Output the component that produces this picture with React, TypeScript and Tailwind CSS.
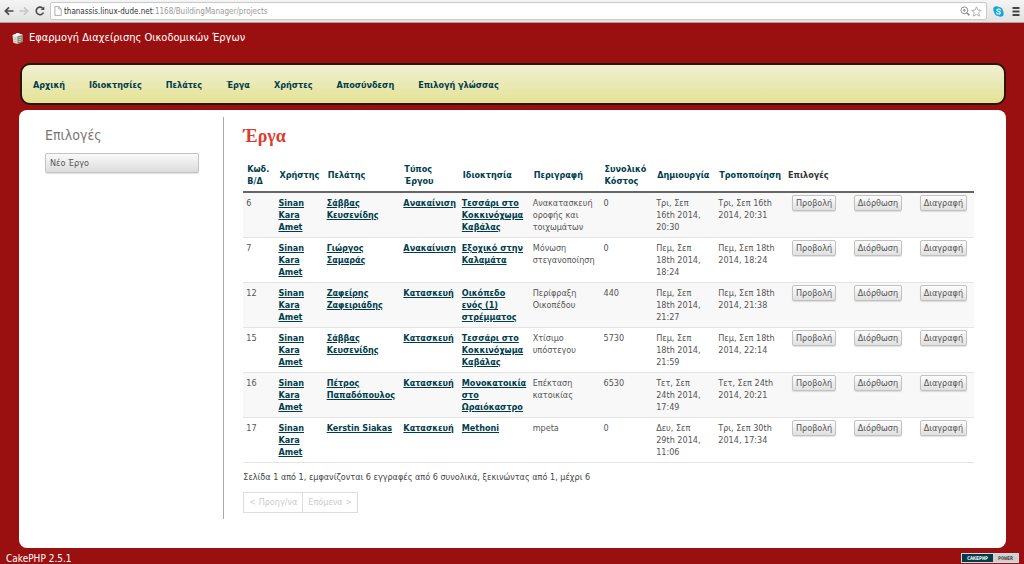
import React from "react";

type Project = {
  id: number;
  client: string;
  kind: string;
  property: string;
  description: string;
  cost: number;
  created: string;
  modified: string;
};

const navItems = ["Αρχική", "Ιδιοκτησίες", "Πελάτες", "Έργα", "Χρήστες", "Αποσύνδεση", "Επιλογή γλώσσας"];

const columns = [
  { label: "Κωδ.\nΒ/Δ", width: "w-[4.4%]" },
  { label: "Χρήστης", width: "w-[6.6%]" },
  { label: "Πελάτης", width: "w-[10.5%]" },
  { label: "Τύπος\nΈργου", width: "w-[8%]" },
  { label: "Ιδιοκτησία", width: "w-[9.7%]" },
  { label: "Περιγραφή", width: "w-[9.7%]" },
  { label: "Συνολικό\nΚόστος", width: "w-[7.2%]" },
  { label: "Δημιουργία", width: "w-[8.5%]" },
  { label: "Τροποποίηση", width: "w-[9.4%]" },
];

const projects: Project[] = [
  { id: 6, client: "Σάββας\nΚευσενίδης", kind: "Ανακαίνιση", property: "Τεσσάρι στο\nΚοκκινόχωμα\nΚαβάλας", description: "Ανακατασκευή\nοροφής και\nτοιχωμάτων", cost: 0, created: "Τρι, Σεπ\n16th 2014,\n20:30", modified: "Τρι, Σεπ 16th\n2014, 20:31" },
  { id: 7, client: "Γιώργος\nΣαμαράς", kind: "Ανακαίνιση", property: "Εξοχικό στην\nΚαλαμάτα", description: "Μόνωση\nστεγανοποίηση", cost: 0, created: "Πεμ, Σεπ\n18th 2014,\n18:24", modified: "Πεμ, Σεπ 18th\n2014, 18:24" },
  { id: 12, client: "Ζαφείρης\nΖαφειριάδης", kind: "Κατασκευή", property: "Οικόπεδο\nενός (1)\nστρέμματος", description: "Περίφραξη\nΟικοπέδου", cost: 440, created: "Πεμ, Σεπ\n18th 2014,\n21:27", modified: "Πεμ, Σεπ 18th\n2014, 21:38" },
  { id: 15, client: "Σάββας\nΚευσενίδης", kind: "Κατασκευή", property: "Τεσσάρι στο\nΚοκκινόχωμα\nΚαβάλας", description: "Χτίσιμο\nυπόστεγου", cost: 5730, created: "Πεμ, Σεπ\n18th 2014,\n21:59", modified: "Πεμ, Σεπ 18th\n2014, 22:14" },
  { id: 16, client: "Πέτρος\nΠαπαδόπουλος", kind: "Κατασκευή", property: "Μονοκατοικία\nστο\nΩραιόκαστρο", description: "Επέκταση\nκατοικίας", cost: 6530, created: "Τετ, Σεπ\n24th 2014,\n17:49", modified: "Τετ, Σεπ 24th\n2014, 20:21" },
  { id: 17, client: "Kerstin Siakas", kind: "Κατασκευή", property: "Methoni", description: "mpeta", cost: 0, created: "Δευ, Σεπ\n29th 2014,\n11:06", modified: "Τρι, Σεπ 30th\n2014, 17:34" },
];

function BrowserBar() {
  return (
    <div className="flex h-[23px] items-center border-b border-[#b9a0a0] bg-linear-to-b from-[#f4f4f4] to-[#e2e2e2] pr-1 pl-1">
      <button type="button" aria-label="Back" className="flex w-[14px] shrink-0">
        <svg viewBox="0 0 10 10" className="size-[10px]" fill="none" stroke="#4a4a4a" strokeWidth="1.7"><path d="M9.5 5H1.5M5 1.3 1.3 5 5 8.7" /></svg>
      </button>
      <button type="button" aria-label="Forward" className="ml-px flex w-[16px] shrink-0">
        <svg viewBox="0 0 10 10" className="size-[10px]" fill="none" stroke="#c6c6c6" strokeWidth="1.7"><path d="M.5 5H8.5M5 1.3 8.7 5 5 8.7" /></svg>
      </button>
      <button type="button" aria-label="Reload" className="flex w-[15px] shrink-0">
        <svg viewBox="0 0 10 10" className="size-[10px]" fill="none" stroke="#4a4a4a" strokeWidth="1.6"><path d="M8.5 6.500A3.8 3.8 0 1 1 7.7 2.200" /><path d="M9.3.4V4H5.700Z" fill="#4a4a4a" stroke="none" /></svg>
      </button>
      <div className="flex h-[18px] min-w-0 grow items-center rounded-[2px] border border-[#c9c9c9] bg-white pr-1 pl-[3px]">
        <svg viewBox="0 0 8 10" className="h-[10px] w-[8px] shrink-0" fill="#fff" stroke="#a5a5a5" strokeWidth="0.9"><path d="M.9.6H4.8L7.2 3V9.4H.9ZM4.8.6V3H7.2" /></svg>
        <div className="ml-[2px] grow truncate pt-px text-[8px] leading-3 text-[#999]">
          <span className="text-[#333]">thanassis.linux-dude.net</span>:1168/BuildingManager/projects
        </div>
        <svg viewBox="0 0 10 10" className="size-[10px] shrink-0" fill="none" stroke="#8d8d8d" strokeWidth="1"><circle cx="4.3" cy="4.3" r="3.4" /><path d="M2.8 4.3H5.8M4.3 2.8V5.8" /><path d="m6.8 6.8 2.6 2.6" strokeWidth="1.5" /></svg>
        <svg viewBox="0 0 12 12" className="ml-px size-[11px] shrink-0" fill="#fff" stroke="#a0a0a0" strokeWidth="0.9"><path d="m6 .9 1.5 3.5 3.8.4-2.9 2.5.9 3.8L6 9.1l-3.3 2 .9-3.8L.7 4.8l3.8-.4Z" /></svg>
      </div>
      <svg viewBox="0 0 12 12" className="ml-[6px] size-[11px] shrink-0"><circle cx="3.8" cy="3.8" r="3.5" fill="#14a7dc" /><circle cx="8.2" cy="8.2" r="3.5" fill="#14a7dc" /><circle cx="6" cy="6" r="4.9" fill="#14a7dc" /><path d="M8 4.3C7.6 2.9 4.2 2.8 4.1 4.5 4 6.1 7.9 5.6 8 7.4 8.1 9.3 4.3 9.2 3.9 7.5" fill="none" stroke="#fff" strokeWidth="1.2" strokeLinecap="round" /></svg>
      <button type="button" aria-label="Menu" className="ml-2 flex shrink-0">
        <svg viewBox="0 0 8 9" className="h-[9px] w-[8px]" fill="#444"><path d="M.5 0H7.5V2H.5ZM.5 3.5H7.5V5.5H.5ZM.5 7H7.5V9H.5Z" /></svg>
      </button>
    </div>
  );
}

function ActionButton({ children }: { children: string }) {
  return (
    <button type="button" className="h-4 rounded-[2px] border border-[#c2c2c2] bg-linear-to-b from-[#fdfdfd] to-[#e0e0e0] px-[3px] text-[9px] leading-[14px] text-[#555] shadow-[0_1px_1px_rgba(0,0,0,0.12)]">
      {children}
    </button>
  );
}

function CellLink({ children }: { children: string }) {
  return <a href="#" className="font-bold text-[#003d4c] underline">{children}</a>;
}

export default function App() {
  return (
    <div className="flex min-h-screen flex-col bg-[#9a0f0f] [font-family:'DejaVu_Sans_Condensed','DejaVu_Sans',sans-serif]">
      <BrowserBar />

      <header className="flex items-center gap-[6px] px-3 pt-[6px]">
        <svg viewBox="0 0 12 13" className="h-[13px] w-[11px]">
          <path d="M.5 3 6 .5 11.5 2.500V10L6 12.5 1.5 11Z" fill="#e9e4d8" />
          <path d="M6 4 11.5 2.500V10L6 12.500Z" fill="#7d7a6c" />
          <path d="M.5 3 6 .5 11.5 2.5 6 4Z" fill="#fff" />
          <path d="M2 5.5 5 6.2M2 7.5 5 8.2M2 9.5 5 10.2" stroke="#b5a898" strokeWidth="0.8" />
          <path d="M7 6 10.5 5M7 8 10.5 7M7 10 10.5 9" stroke="#dfdccd" strokeWidth="0.9" />
        </svg>
        <h1 className="text-[11px] leading-[18px] text-white">Εφαρμογή Διαχείρισης Οικοδομικών Έργων</h1>
      </header>

      <nav className="mt-4 mr-[18px] ml-[20px] flex h-[42px] items-center gap-6 rounded-[10px] border-2 border-[#2a1608] bg-linear-to-b from-[#f0f0d2] to-[#e4e294] px-[11px] pt-px text-[9px] leading-3 font-bold text-[#003d4c]">
        {navItems.map((item) => (
          <a key={item} href="#">{item}</a>
        ))}
      </nav>

      <div className="mr-[18px] ml-[19px] mt-[5px] flex grow rounded-[8px] bg-white pt-[7px] pb-[29px]">
        <aside className="w-[20.8%] shrink-0 border-r border-[#aaa] pr-6 pl-[26px]">
          <h3 className="pt-2 text-[14px] leading-5 text-[#777]">Επιλογές</h3>
          <button type="button" className="mt-2 block h-[20px] w-full rounded-[2px] border border-[#c4c4c4] bg-linear-to-b from-[#fafafa] to-[#dcdcdc] px-1 text-left text-[9px] leading-[18px] text-[#555] shadow-[0_1px_1px_rgba(0,0,0,0.12)]">
            Νέο Έργο
          </button>
        </aside>

        <main className="min-w-0 grow pr-8 pl-[19px]">
          <h2 className="pt-[7px] text-[18px] leading-6 font-bold text-[#dd3b2e] [font-family:'Liberation_Serif',serif]">Έργα</h2>
          <table className="mt-[11px] w-full table-fixed text-left text-[9px] leading-3 whitespace-pre text-[#555]">
            <thead>
              <tr className="border-b-2 border-[#666]">
                {columns.map((column) => (
                  <th key={column.label} scope="col" className={`${column.width} py-1 pl-1 align-middle font-bold text-[#003d4c]`}>
                    <a href="#">{column.label}</a>
                  </th>
                ))}
                <th scope="col" className="py-1 pl-1 align-middle font-bold text-[#333]">Επιλογές</th>
              </tr>
            </thead>
            <tbody>
              {projects.map((project) => (
                <tr key={project.id} className="h-[45px] border-b border-[#e4e4e4] align-top odd:bg-[#f8f8f8]">
                  <td className="py-1 pl-[3px]">{project.id}</td>
                  <td className="py-1 pl-[3px]"><CellLink>{"Sinan\nKara\nAmet"}</CellLink></td>
                  <td className="py-1 pl-[3px]"><CellLink>{project.client}</CellLink></td>
                  <td className="py-1 pl-[3px]"><CellLink>{project.kind}</CellLink></td>
                  <td className="py-1 pl-[3px]"><CellLink>{project.property}</CellLink></td>
                  <td className="py-1 pl-[3px]">{project.description}</td>
                  <td className="py-1 pl-[3px]">{project.cost}</td>
                  <td className="py-1 pl-[3px]">{project.created}</td>
                  <td className="py-1 pl-[3px]">{project.modified}</td>
                  <td className="pt-[2px] pr-[7px] pl-2">
                    <div className="flex justify-between">
                      <ActionButton>Προβολή</ActionButton>
                      <ActionButton>Διόρθωση</ActionButton>
                      <ActionButton>Διαγραφή</ActionButton>
                    </div>
                  </td>
                </tr>
              ))}
            </tbody>
          </table>
          <p className="mt-2 text-[9px] leading-3 text-[#444]">
            Σελίδα 1 από 1, εμφανίζονται 6 εγγραφές από 6 συνολικά, ξεκινώντας από 1, μέχρι 6
          </p>
          <div className="mt-[9px] inline-flex h-[21px] border border-[#ddd] text-[9px] leading-[19px] text-[#ccc]">
            <button type="button" disabled className="border-r border-[#ddd] px-[5px]">&lt; Προηγ/να</button>
            <button type="button" disabled className="px-[5px]">Επόμενα &gt;</button>
          </div>
        </main>
      </div>

      <footer className="flex h-4 items-center justify-between pr-[5px] pl-[6px] text-white">
        <p className="pt-[6px] text-[10px] leading-3">CakePHP 2.5.1</p>
        <a href="#" className="mt-1 flex h-[10px] w-[58px] border border-[#d8d8d8] text-center text-[5px] leading-[8px] font-bold [font-family:'DejaVu_Sans_Mono',monospace]">
          <span className="w-[31px] bg-[#003d4c] text-white">CAKEPHP</span>
          <span className="grow bg-[#d0d0d0] text-[#444]">POWER</span>
        </a>
      </footer>
    </div>
  );
}
